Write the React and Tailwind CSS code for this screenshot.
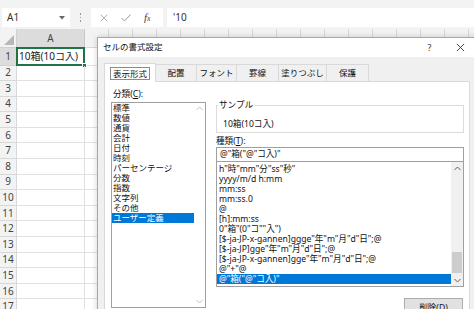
import React from 'react';

const categories = ['標準', '数値', '通貨', '会計', '日付', '時刻', 'パーセンテージ', '分数', '指数', '文字列', 'その他', 'ユーザー定義'];
const formats = [
  'h"時"mm"分"ss"秒"',
  'yyyy/m/d h:mm',
  'mm:ss',
  'mm:ss.0',
  '@',
  '[h]:mm:ss',
  '0"箱"(0"コ""入")',
  '[$-ja-JP-x-gannen]ggge"年"m"月"d"日";@',
  '[$-ja-JP]gge"年"m"月"d"日";@',
  '[$-ja-JP-x-gannen]gge"年"m"月"d"日";@',
  '@"+"@',
  '@"箱("@"コ入)"',
];
const tabs = [
  { label: '表示形式', w: 'w-[52px]' },
  { label: '配置', w: 'w-[41px]' },
  { label: 'フォント', w: 'w-[40px]' },
  { label: '罫線', w: 'w-[42px]' },
  { label: '塗りつぶし', w: 'w-[48px]' },
  { label: '保護', w: 'w-[42px]' },
];
const rows = Array.from({ length: 17 }, (_, i) => i + 1);
const cols = Array.from({ length: 17 }, (_, i) => i);

function Chevron({ up, color = '#606060' }) {
  return (
    <svg width="7" height="5" viewBox="0 0 7 5">
      <path d={up ? 'M0.5 4 L3.5 1 L6.5 4' : 'M0.5 1 L3.5 4 L6.5 1'} fill="none" stroke={color} strokeWidth="1" />
    </svg>
  );
}

function XIcon({ size = 9, color = '#444', sw = 1 }) {
  return (
    <svg width={size} height={size} viewBox="0 0 10 10">
      <path d="M1 1 L9 9 M9 1 L1 9" stroke={color} strokeWidth={sw} fill="none" />
    </svg>
  );
}

export default function App() {
  return (
    <div className="relative w-[474px] h-[309px] overflow-hidden bg-white font-['Noto_Sans','Noto_Sans_CJK_JP',sans-serif] text-[#222]">
      {/* formula bar */}
      <div className="h-[29px] bg-[#f3f3f3] flex items-start pt-[8px] pl-[2px]">
        <div className="w-[68px] h-[19px] bg-white flex items-center justify-between pl-[5px] pr-[5px] text-[10px] text-[#333]">
          <span>A1</span>
          <svg width="6" height="4" viewBox="0 0 6 4"><path d="M0 0 L6 0 L3 3.5 Z" fill="#666" /></svg>
        </div>
        <div className="w-[21px] h-[19px] flex flex-col items-center justify-center gap-[2px]">
          <div className="w-[1.5px] h-[1.5px] bg-[#999]" />
          <div className="w-[1.5px] h-[1.5px] bg-[#999]" />
          <div className="w-[1.5px] h-[1.5px] bg-[#999]" />
        </div>
        <div className="w-[72px] h-[19px] bg-white flex items-center pl-[9px] gap-[13px]">
          <XIcon size={8} color="#9a9a9a" sw={1} />
          <svg width="10" height="8" viewBox="0 0 10 8"><path d="M0.5 4 L3.5 7 L9.5 0.5" stroke="#9a9a9a" strokeWidth="1" fill="none" /></svg>
          <span className="font-['Liberation_Serif',serif] italic text-[11px] text-[#444] leading-none">f<span className="text-[8px]">x</span></span>
        </div>
        <div className="flex-1 ml-[4px] h-[19px] bg-white flex items-center pl-[6px] text-[10px] text-[#333]">'10</div>
      </div>

      {/* column header */}
      <div className="flex h-[19px]">
        <div className="w-[17px] shrink-0 bg-[#f3f3f3] border-r border-b border-[#d0d0d0] flex items-end justify-end p-[2px]">
          <svg width="10" height="10" viewBox="0 0 10 10"><path d="M10 0 L10 10 L0 10 Z" fill="#b8b8b8" /></svg>
        </div>
        <div className="w-[68px] shrink-0 bg-[#dcdcdc] border-r border-b border-[#c8c8c8] flex items-center justify-center text-[10px] text-[#444]">A</div>
        {cols.map((c) => (
          <div key={c} className="w-[24px] shrink-0 bg-[#f3f3f3] border-r border-b border-[#d8d8d8]" />
        ))}
      </div>

      {/* rows */}
      {rows.map((r) => (
        <div key={r} className={r === 1 ? 'flex h-[17.5px]' : 'flex h-[15.6px]'}>
          <div className={r === 1 ? 'w-[17px] shrink-0 bg-[#dcdcdc] border-r border-b border-[#d0d0d0] flex items-center justify-center text-[10px] text-[#444]' : 'w-[17px] shrink-0 bg-[#f3f3f3] border-r border-b border-[#d8d8d8] flex items-center justify-center text-[10px] text-[#444]'}>
            {r}
          </div>
          <div className="relative w-[68px] shrink-0 border-r border-b border-[#e1e1e1] flex items-center pl-[2px] text-[10px] text-[#222]">
            {r === 1 && (
              <>
                <span>10箱(10コ入)</span>
                <div className="absolute -left-[1px] -top-[1px] -right-[1px] -bottom-[1px] border-2 border-[#217346]" />
                <div className="absolute -right-[3px] -bottom-[3px] w-[5px] h-[5px] bg-[#217346] border border-white" />
              </>
            )}
          </div>
          {cols.map((c) => (
            <div key={c} className="w-[24px] shrink-0 border-r border-b border-[#e1e1e1]" />
          ))}
        </div>
      ))}

      {/* dialog */}
      <div className="absolute left-[97px] top-[37px] w-[384px] h-[290px] bg-[#f0f0f0] border border-[#a8a8a8] shadow-[0_0_6px_rgba(0,0,0,0.18)] text-[8.6px] text-[#111]">
        {/* title */}
        <div className="h-[19px] bg-white flex items-center pl-[5px] pr-[4px]">
          <span className="flex-1 leading-none text-[8.5px]">セルの書式設定</span>
          <span className="w-[31px] text-center text-[9px] text-[#333]">?</span>
          <span className="w-[31px] flex items-center justify-center"><XIcon size={9} color="#333" sw={1} /></span>
        </div>
        {/* tabs */}
        <div className="pt-[5px] pl-[6px] flex items-end h-[24px] text-[8.5px]">
          {tabs.map((t, i) =>
            i === 0 ? (
              <div key={t.label} className={`${t.w} h-[19px] -mb-px relative z-10 bg-white border border-b-0 border-[#d9d9d9] flex items-center justify-center`}>
                <span className="border border-[#8a8a8a] px-[2px] leading-[11px]">{t.label}</span>
              </div>
            ) : (
              <div key={t.label} className={`${t.w} h-[17px] bg-[#f0f0f0] border-t border-r border-[#d9d9d9] flex items-center justify-center`}>
                {t.label}
              </div>
            )
          )}
        </div>
        {/* panel */}
        <div className="ml-[6px] w-[366px] h-[260px] bg-white border border-[#d9d9d9] flex pl-[6px] gap-[10px]">
          {/* left */}
          <div className="flex flex-col pt-[6px] w-[95px]">
            <div className="h-[13px] leading-[13px] pl-[2px]">
              分類(<span className="underline">C</span>):
            </div>
            <div className="mt-[1px] h-[206px] border border-[#a0a0a0] flex text-[8.5px]">
              <div className="flex-1 flex flex-col">
                {categories.map((c, i) => (
                  <div key={c} className={i === 11 ? 'h-[10px] leading-[10px] pl-[1px] bg-[#0078d7] text-white' : 'h-[10px] leading-[10px] pl-[1px]'}>
                    {c}
                  </div>
                ))}
              </div>
              <div className="w-[11px] flex flex-col items-center justify-between py-[3px]">
                <Chevron up color="#c0c0c0" />
                <Chevron color="#c0c0c0" />
              </div>
            </div>
          </div>
          {/* right */}
          <div className="flex flex-col w-[248px] pt-[18px]">
            <fieldset className="border border-[#dcdcdc] pl-[6px] pt-[9px] pb-[3px]">
              <legend className="leading-[10px] -ml-[5px] px-[1px]">サンプル</legend>
              <div className="h-[10px] leading-[10px]">10箱(10コ入)</div>
            </fieldset>
            <div className="mt-[3px] h-[11px] leading-[11px]">
              種類(<span className="underline">T</span>):
            </div>
            <div className="h-[15px] border border-[#a0a0a0] flex items-center pl-[3px]">@"箱("@"コ入)"</div>
            <div className="-mt-px h-[126px] border border-[#a0a0a0] flex">
              <div className="flex-1 flex flex-col pt-[2px]">
                {formats.map((f, i) => (
                  <div key={i} className={i === 11 ? 'h-[10px] leading-[10px] pl-[2px] bg-[#0078d7] text-white whitespace-nowrap' : 'h-[10px] leading-[10px] pl-[2px] whitespace-nowrap'}>
                    {f}
                  </div>
                ))}
              </div>
              <div className="w-[12px] bg-[#f0f0f0] flex flex-col">
                <div className="h-[12px] flex items-center justify-center"><Chevron up /></div>
                <div className="flex-1 flex flex-col justify-end items-center pb-[1px]">
                  <div className="w-[10px] h-[21px] bg-[#cdcdcd]" />
                </div>
                <div className="h-[12px] flex items-center justify-center"><Chevron /></div>
              </div>
            </div>
            <div className="mt-[11px] flex justify-end pr-[1px]">
              <div className="w-[59px] h-[21px] bg-[#e1e1e1] border border-[#adadad] flex items-center justify-center">
                削除(<span className="underline">D</span>)
              </div>
            </div>
          </div>
        </div>
      </div>
    </div>
  );
}
